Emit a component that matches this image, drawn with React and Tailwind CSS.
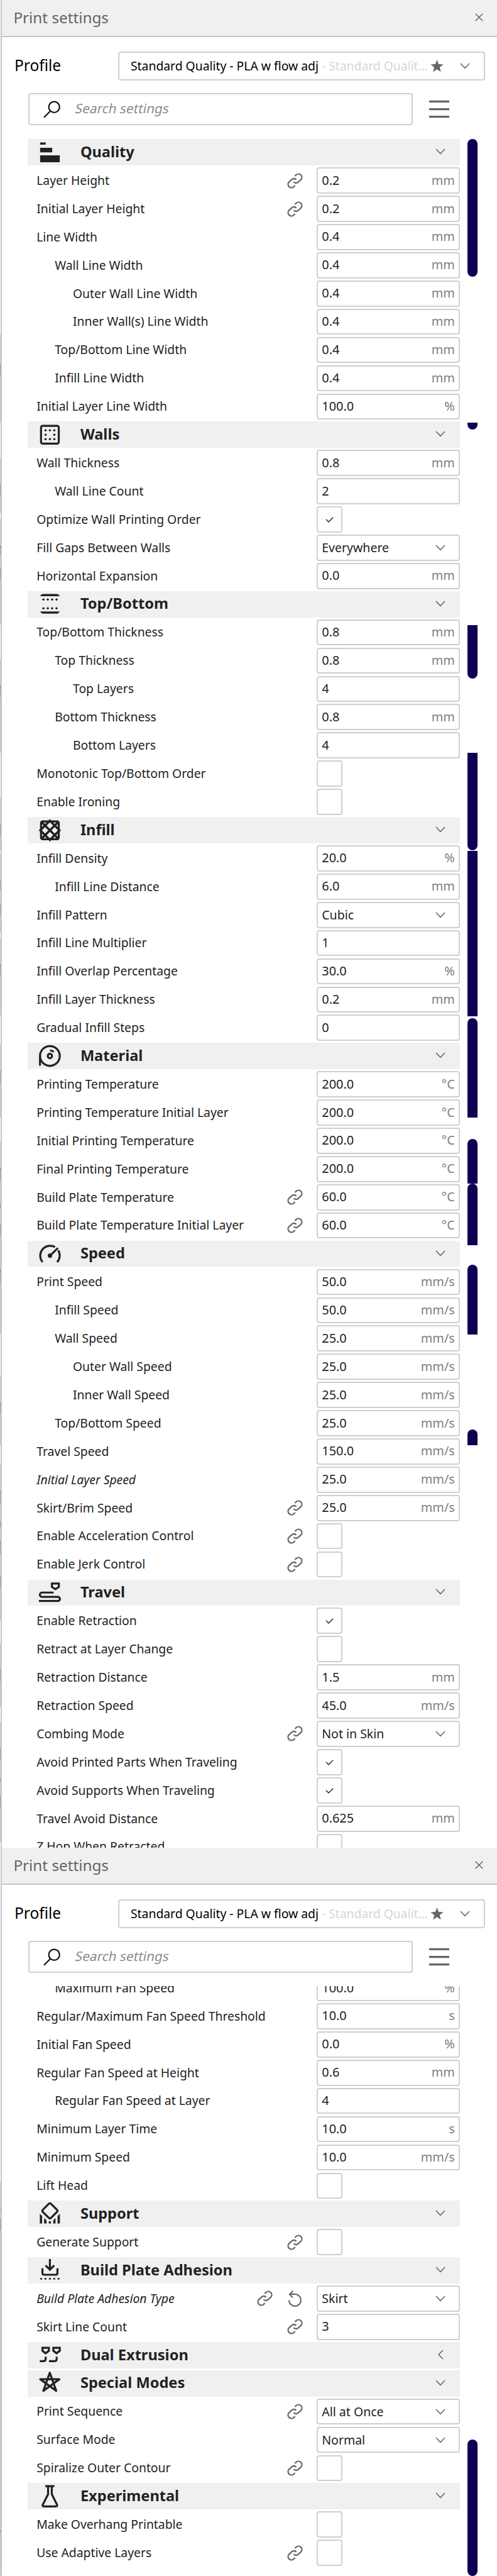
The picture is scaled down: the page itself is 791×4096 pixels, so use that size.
import React from "react";

const SCALE = 0.80188;

/* ---------- icons ---------- */

function Glyph({ children }) {
  return (
    <svg viewBox="0 0 24 24" className="block h-[38.5px] w-[38.5px]" fill="none" stroke="#222222" strokeWidth="2">
      {children}
    </svg>
  );
}

const dots = (points, r = 1.1) =>
  points.map(([x, y]) => <circle key={x + "-" + y} cx={x} cy={y} r={r} fill="#222222" stroke="none" />);

const icons = {
  quality: (
    <Glyph>
      <path fill="#222222" stroke="none" d="M2.4 2.2h5.5v2.1H2.4zM2.4 7.5h12V12h-12zM2.4 15h19.5v6.8H2.4z" />
    </Glyph>
  ),
  walls: (
    <Glyph>
      <rect x="3.3" y="3.2" width="17.6" height="17.6" rx="1.6" />
      {dots([[7.8, 7.7], [12.1, 7.7], [16.5, 7.7], [7.8, 12], [16.5, 12], [7.8, 16.3], [12.1, 16.3], [16.5, 16.3]])}
    </Glyph>
  ),
  topBottom: (
    <Glyph>
      <path fill="#222222" stroke="none" d="M2.5 4.3C3.1 3 4 2.2 5.3 2.2h13.6c1.3 0 2.3.8 2.9 2.1zM2.5 19.5c.6 1.3 1.5 2.2 2.8 2.2h13.6c1.3 0 2.3-.9 2.9-2.2z" />
      {dots([[5.7, 7.7], [10, 7.7], [14.3, 7.7], [18.7, 7.7], [5.7, 16.3], [10, 16.3], [14.3, 16.3], [18.7, 16.3]])}
    </Glyph>
  ),
  infill: (
    <Glyph>
      <rect x="3.3" y="3.2" width="17.6" height="17.6" rx="1.6" />
      <path strokeWidth="2.2" d="M3.5 3.4l17.2 17.2M20.7 3.4L3.5 20.6M12.1 2.5l9.5 9.5-9.5 9.5L2.6 12z" />
    </Glyph>
  ),
  material: (
    <Glyph>
      <circle cx="12.1" cy="11.9" r="9.8" />
      <circle cx="12.1" cy="11.9" r="2.15" />
      <path d="M12.2 6.4c1.5 0 2.7.5 3.7 1.5M2.3 11.9v9.6" />
    </Glyph>
  ),
  speed: (
    <Glyph>
      <path d="M4.9 20.5A9.8 9.8 0 0 1 17.2 5.6M20.4 8.8a9.8 9.8 0 0 1-1.1 11.7M12.2 14.1l7.9-7.6" />
      {dots([[12.2, 14.1]], 2.2)}
    </Glyph>
  ),
  travel: (
    <Glyph>
      <path d="M14.1 3.1h6.9v3.3l-3.45 2.2-3.45-2.2zM15.8 12H4.3a2.15 2.15 0 0 0 0 4.3H20a2.05 2.05 0 0 1 0 4.1H1.2" />
    </Glyph>
  ),
  support: (
    <Glyph>
      <rect x="6.4" y="3.3" width="11.4" height="11.4" rx="1.5" transform="rotate(45 12.1 9)" />
      <path
        fill="#222222"
        stroke="none"
        d="M2.1 11.9l2.3 2.2v7.4H2.1zM6.4 16l2.4 2.4v3.1H6.4zM11 19.4h2.2v2.1H11zM17.7 16l-2.3 2.4v3.1h2.3zM22 11.9l-2.3 2.2v7.4H22z"
      />
    </Glyph>
  ),
  adhesion: (
    <Glyph>
      <path d="M12.1.7v10.4M7.8 6.9l4.3 4.3 4.3-4.3" />
      <path d="M4.7 9.8v4.7c0 1 .7 1.7 1.7 1.7h11.5c1 0 1.7-.7 1.7-1.7V9.8" />
      {dots([[3.4, 20.1], [7.7, 20.1], [12.1, 20.1], [16.4, 20.1], [20.7, 20.1]], 1)}
    </Glyph>
  ),
  dual: (
    <Glyph>
      <path d="M4.7 4.5h6.4v2.9L7.9 9.9 4.7 7.4zM15.5 4.5h6.4v2.9l-3.2 2.5-3.2-2.5zM7.9 13.2v2.6c0 1.2-.6 1.9-1.8 1.9h-4M18.8 13.2v2.6c0 1.2-.6 1.9-1.8 1.9h-5.8" />
    </Glyph>
  ),
  special: (
    <Glyph>
      <path strokeLinejoin="round" d="M12 1.7l6.4 18L2.5 8.2h19L5.6 19.7z" />
    </Glyph>
  ),
  experimental: (
    <Glyph>
      <path d="M7.5 1.9h9.1M10.3 2v8L5 20.4c-.4.9.1 1.600 1 1.600h12.200c.9 0 1.400-.7 1-1.600L14 10V2" />
    </Glyph>
  ),
};

function ChainIcon() {
  return (
    <svg viewBox="0 0 31 31" className="h-[25px] w-[25px] shrink-0" fill="none" stroke="#6b6b6b" strokeWidth="2.9">
      <path d="M15.3 6.2L18 3.6A6.7 6.7 0 0 1 27.5 13l-5.7 5.2a6 6 0 0 1-8.8-.5" />
      <path d="M15.7 24.8L13 27.4A6.7 6.7 0 0 1 3.5 18l5.7-5.2a6 6 0 0 1 8.8.5" />
    </svg>
  );
}

function ResetIcon() {
  return (
    <svg viewBox="0 0 31 33" className="h-[26.5px] w-[25px] shrink-0" fill="none" stroke="#6b6b6b" strokeWidth="2.8">
      <path d="M3.6 19.3A11.8 11.8 0 1 0 15.4 7.4H4.5M11.6 1L4.8 7.4l6.2 6.6" />
    </svg>
  );
}

function Chevron({ left = false }) {
  return left ? (
    <svg viewBox="0 0 10 16" className="h-[16px] w-[10px]" fill="none" stroke="#666666" strokeWidth="1.5">
      <path d="M9 1L2 8l7 7" />
    </svg>
  ) : (
    <svg viewBox="0 0 16 10" className="h-[10px] w-[16px]" fill="none" stroke="#666666" strokeWidth="1.5">
      <path d="M1 1l7 7.3L15 1" />
    </svg>
  );
}

/* ---------- data ---------- */

const num = (label, value, unit = "", extra = {}) => ({ type: "num", label, value, unit, ...extra });
const check = (label, on = false, extra = {}) => ({ type: "check", label, on, ...extra });
const select = (label, value, extra = {}) => ({ type: "select", label, value, ...extra });
const head = (label, icon, closed = false) => ({ type: "head", label, icon, closed });
const link = { link: true };
const in1 = { level: 1 };
const in2 = { level: 2 };

const upperRows = [
  head("Quality", "quality"),
  num("Layer Height", "0.2", "mm", link),
  num("Initial Layer Height", "0.2", "mm", link),
  num("Line Width", "0.4", "mm"),
  num("Wall Line Width", "0.4", "mm", in1),
  num("Outer Wall Line Width", "0.4", "mm", in2),
  num("Inner Wall(s) Line Width", "0.4", "mm", in2),
  num("Top/Bottom Line Width", "0.4", "mm", in1),
  num("Infill Line Width", "0.4", "mm", in1),
  num("Initial Layer Line Width", "100.0", "%"),
  head("Walls", "walls"),
  num("Wall Thickness", "0.8", "mm"),
  num("Wall Line Count", "2", "", in1),
  check("Optimize Wall Printing Order", true),
  select("Fill Gaps Between Walls", "Everywhere"),
  num("Horizontal Expansion", "0.0", "mm"),
  head("Top/Bottom", "topBottom"),
  num("Top/Bottom Thickness", "0.8", "mm"),
  num("Top Thickness", "0.8", "mm", in1),
  num("Top Layers", "4", "", in2),
  num("Bottom Thickness", "0.8", "mm", in1),
  num("Bottom Layers", "4", "", in2),
  check("Monotonic Top/Bottom Order"),
  check("Enable Ironing"),
  head("Infill", "infill"),
  num("Infill Density", "20.0", "%"),
  num("Infill Line Distance", "6.0", "mm", in1),
  select("Infill Pattern", "Cubic"),
  num("Infill Line Multiplier", "1"),
  num("Infill Overlap Percentage", "30.0", "%"),
  num("Infill Layer Thickness", "0.2", "mm"),
  num("Gradual Infill Steps", "0"),
  head("Material", "material"),
  num("Printing Temperature", "200.0", "°C"),
  num("Printing Temperature Initial Layer", "200.0", "°C"),
  num("Initial Printing Temperature", "200.0", "°C"),
  num("Final Printing Temperature", "200.0", "°C"),
  num("Build Plate Temperature", "60.0", "°C", link),
  num("Build Plate Temperature Initial Layer", "60.0", "°C", link),
  head("Speed", "speed"),
  num("Print Speed", "50.0", "mm/s"),
  num("Infill Speed", "50.0", "mm/s", in1),
  num("Wall Speed", "25.0", "mm/s", in1),
  num("Outer Wall Speed", "25.0", "mm/s", in2),
  num("Inner Wall Speed", "25.0", "mm/s", in2),
  num("Top/Bottom Speed", "25.0", "mm/s", in1),
  num("Travel Speed", "150.0", "mm/s"),
  num("Initial Layer Speed", "25.0", "mm/s", { italic: true }),
  num("Skirt/Brim Speed", "25.0", "mm/s", link),
  check("Enable Acceleration Control", false, link),
  check("Enable Jerk Control", false, link),
  head("Travel", "travel"),
  check("Enable Retraction", true),
  check("Retract at Layer Change"),
  num("Retraction Distance", "1.5", "mm"),
  num("Retraction Speed", "45.0", "mm/s"),
  select("Combing Mode", "Not in Skin", link),
  check("Avoid Printed Parts When Traveling", true),
  check("Avoid Supports When Traveling", true),
  num("Travel Avoid Distance", "0.625", "mm"),
  check("Z Hop When Retracted"),
];

const lowerRows = [
  num("Maximum Fan Speed", "100.0", "%", in1),
  num("Regular/Maximum Fan Speed Threshold", "10.0", "s"),
  num("Initial Fan Speed", "0.0", "%"),
  num("Regular Fan Speed at Height", "0.6", "mm"),
  num("Regular Fan Speed at Layer", "4", "", in1),
  num("Minimum Layer Time", "10.0", "s"),
  num("Minimum Speed", "10.0", "mm/s"),
  check("Lift Head"),
  head("Support", "support"),
  check("Generate Support", false, link),
  head("Build Plate Adhesion", "adhesion"),
  select("Build Plate Adhesion Type", "Skirt", { link: true, reset: true, italic: true }),
  num("Skirt Line Count", "3", "", link),
  head("Dual Extrusion", "dual", true),
  head("Special Modes", "special"),
  select("Print Sequence", "All at Once", link),
  select("Surface Mode", "Normal"),
  check("Spiralize Outer Contour", false, link),
  head("Experimental", "experimental"),
  check("Make Overhang Printable"),
  check("Use Adaptive Layers", false, link),
];

/* Scroll bar pieces: [start, end, round top, round bottom] */
const upperBars = [
  [275.5, 549, true, true],
  [838, 851.5, false, true],
  [1239.2, 1346, false, true],
  [1493, 1686.6, false, true],
  [1687.2, 2014.8, false, false],
  [2018.8, 2216, true, false],
  [2258, 2347.5, true, false],
  [2347.5, 2468.8, true, false],
  [2508.6, 2646, true, false],
  [2834.6, 2866, true, false],
];
const lowerBars = [[1173, 1444, true, true]];

/* Sliver of the window behind, left of the panel: [end, colour] */
const W = "#ffffff", G = "#cfcfcf", B = "#3b78c4", D = "#a0a0a0", L = "#c6c6c6";
const sliver = [
  [664, W], [723, G], [724.5, B], [746, D], [837.5, L], [908, W], [961, G], [962.5, B], [983, D], [1017, L],
  [1029, W], [1083, G], [1084.5, B], [1100, D], [1126, G], [1127.5, B], [1148, D], [1239, L], [1307, W], [1360, G],
  [1361.5, B], [1382, D], [1493, L], [1582, W], [1635, G], [1636.5, B], [1657, D], [1687, L], [1694, W], [1747, G],
  [1748.5, B], [1765, D], [1792, G], [1793.5, B], [1814, D], [1849, L], [1861, W], [1914, G], [1915.5, B], [1936, D],
  [2015, L], [2071, W], [2124, G], [2125.5, B], [2147, D], [2216, L], [2264, W], [2317, G], [2318.5, B], [2340, D],
  [2348, L], [2387, G], [2388.5, B], [2398, D], [2427, G], [2428.5, B], [2450, D], [2519, L], [2520.5, B], [2542, D],
  [2646, L], [2729, W], [2782, G], [2783.5, B], [2804, D], [2866, L], [2904, W], [2958, G], [2959.5, B], [2981, D],
  [3019, G], [3020.5, B], [3030, D], [3058, G], [3059.5, B], [3082, D], [3126, G], [3127.5, B], [3148, D], [3215, L],
  [3259, W], [3312, G], [3313.5, B], [3334, D], [3385, L], [3416, W], [3469, G], [3470.5, B], [3491, D], [3529, G],
  [3530.5, B], [3535, D], [3563, G], [3564.5, B], [3585, D], [3654, L], [4328, W], [4381, G], [4382.5, B], [4401, G],
  [4402.5, B], [4423, D], [5020, L], [5022, B], [5108, L],
];

/* ---------- pieces ---------- */

function Control({ row }) {
  if (row.type === "check") {
    return (
      <div className="flex h-full w-[41.7px] items-center justify-center rounded-[4px] border-2 border-[#cfcfcf] bg-white">
        {row.on && (
          <svg viewBox="0 0 13 9" className="mt-px h-[9px] w-[13px]" fill="none" stroke="#333333" strokeWidth="1.5">
            <path d="M.8 3.8L5 7.9 12.2.7" />
          </svg>
        )}
      </div>
    );
  }
  if (row.type === "select") {
    return (
      <div className="flex h-full items-center justify-between rounded-[4px] border-2 border-[#cfcfcf] bg-white pr-[21.5px] pl-[6.5px] text-[19.5px]">
        <span>{row.value}</span>
        <Chevron />
      </div>
    );
  }
  return (
    <div className="flex h-full items-center justify-between rounded-[4px] border-2 border-[#cfcfcf] bg-white pr-[6.5px] pb-px pl-[6.5px] text-[19.9px]">
      <span>{row.value}</span>
      <span className="text-[#808080]">{row.unit}</span>
    </div>
  );
}

function Row({ row }) {
  if (row.type === "head") {
    return (
      <div className="h-[44.91px] shrink-0">
        <div className="flex h-[41.7px] items-center bg-[#f0f0f0] pr-[23.2px] pl-[16.2px]">
          {icons[row.icon]}
          <span className="ml-[29px] flex-1 pb-px text-[23.6px] font-bold">{row.label}</span>
          <span className={row.closed ? "mr-[3px] pb-[2px]" : "pb-[2px]"}>
            <Chevron left={row.closed} />
          </span>
        </div>
      </div>
    );
  }
  const indent = row.level === 2 ? "pl-[71.8px]" : row.level === 1 ? "pl-[43px]" : "pl-[14px]";
  return (
    <div className="h-[44.91px] shrink-0">
      <div className={`flex h-[41.7px] items-center ${indent}`}>
        <span className={`flex-1 pb-px text-[19.33px] ${row.italic ? "italic" : ""}`}>{row.label}</span>
        <div className="mr-[21.7px] flex items-center gap-[23px]">
          {row.link && <ChainIcon />}
          {row.reset && <ResetIcon />}
        </div>
        <div className="h-full w-[228.6px] shrink-0">
          <Control row={row} />
        </div>
      </div>
    </div>
  );
}

function ScrollTrack({ bars, from }) {
  let at = from;
  return (
    <div className="ml-[11.3px] flex w-[16.5px] shrink-0 flex-col">
      {bars.map(([start, end, top, bottom]) => {
        const gap = (start - at) * SCALE;
        at = end;
        return (
          <div
            key={start}
            className={`shrink-0 bg-[#0e0052] ${top ? "rounded-t-full" : ""} ${bottom ? "rounded-b-full" : ""}`}
            style={{ marginTop: gap, height: (end - start) * SCALE }}
          />
        );
      })}
    </div>
  );
}

function Panel({ className, rows, listClass, rowsClass, bars, from }) {
  return (
    <section className={`flex flex-col overflow-hidden ${className}`}>
      <header className="flex h-[59.3px] shrink-0 items-center justify-between border-b-2 border-[#c6c6c6] bg-[#f0f0f0] pr-[22.5px] pb-px pl-[18.4px] text-[24.25px] text-[#666666]">
        <span>Print settings</span>
        <svg viewBox="0 0 13 13" className="mb-px h-[13px] w-[13px]" fill="none" stroke="#666666" strokeWidth="1.5">
          <path d="M.7.7l11.6 11.6M12.3.7L.7 12.3" />
        </svg>
      </header>
      <div className="mt-[22.9px] flex h-[45.7px] shrink-0 items-center pr-[19.5px] pl-[20px]">
        <span className="w-[165px] pb-px text-[24.5px] text-black">Profile</span>
        <div className="flex h-full flex-1 items-center rounded-[4px] border-2 border-[#cfcfcf] pr-[21.5px] pl-[18px] text-[19.33px] whitespace-pre text-black">
          <span>Standard Quality - PLA w flow adj</span>
          <span className="text-[#d6d6d6]"> - Standard Qualit…</span>
          <svg viewBox="0 0 20 19" className="ml-auto h-[20px] w-[21px]" fill="#666666">
            <path d="M10 0l2.500 6.700 7.200.3-5.600 4.500L16 18.500l-6-4-6 4 1.900-7L.3 7l7.200-.3z" />
          </svg>
          <span className="ml-[26px]">
            <Chevron />
          </span>
        </div>
      </div>
      <div className="mt-[20px] flex h-[51.3px] shrink-0 items-center pl-[41.5px]">
        <div className="flex h-full w-[612.5px] items-center rounded-[4px] border-2 border-[#cfcfcf] pl-[22px]">
          <svg viewBox="0 0 28 28" className="h-[28px] w-[28px]" fill="none" stroke="#111111" strokeWidth="2.2">
            <circle cx="17.2" cy="10.2" r="8.6" />
            <path d="M11.2 16.4L1 26.7" />
          </svg>
          <span className="ml-[23.5px] inline-block -skew-x-12 pb-[2px] text-[20.8px] text-[#8a8a8a]">Search settings</span>
        </div>
        <svg viewBox="0 0 32 29" className="ml-[26px] h-[29px] w-[32px]" fill="#666666">
          <path d="M0 .8h32v3.3H0zM0 12.9h32v3.3H0zM0 25h32v3.3H0z" />
        </svg>
      </div>
      <div className={`flex min-h-0 flex-1 overflow-hidden pl-[41.2px] ${listClass}`}>
        <div className={`flex w-[688.2px] shrink-0 flex-col ${rowsClass}`}>
          {rows.map((row) => (
            <Row key={row.label} row={row} />
          ))}
        </div>
        <ScrollTrack bars={bars} from={from} />
      </div>
    </section>
  );
}

function Sliver() {
  let at = 0;
  return (
    <div className="flex w-px shrink-0 flex-col">
      {sliver.map(([end, color]) => {
        const height = (end - at) * SCALE;
        at = end;
        return <div key={end} className="shrink-0" style={{ height, backgroundColor: color }} />;
      })}
    </div>
  );
}

export default function App() {
  return (
    <div className="flex h-[4096px] w-[791px] overflow-hidden bg-white font-['Noto_Sans',sans-serif] leading-none text-[#222222]">
      <Sliver />
      <main className="flex flex-1 flex-col border-l-2 border-[#c6c6c6]">
        <Panel
          className="h-[2938.1px]"
          rows={upperRows}
          listClass="mt-[21.7px]"
          rowsClass="pt-[0.5px]"
          bars={upperBars}
          from={275.5}
        />
        <Panel
          className="h-[1157.9px]"
          rows={lowerRows}
          listClass="mt-[20.5px]"
          rowsClass="-mt-[17.6px]"
          bars={lowerBars}
          from={274}
        />
      </main>
    </div>
  );
}
